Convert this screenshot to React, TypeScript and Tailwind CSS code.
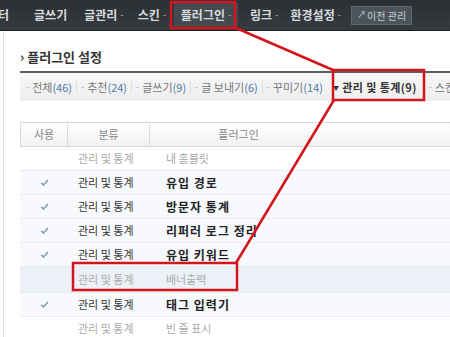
import React from "react";

const font = { fontFamily: '"Noto Sans CJK KR", "Noto Sans", sans-serif' };

function NavItem({ label, arrow, x }: { label: string; arrow?: boolean; x: string }) {
  return (
    <div className={`flex items-center text-[12px] font-bold text-[#d8dcdf] ${x}`}>
      <span>{label}</span>
      {arrow && <span className="ml-[3px] text-[9px] text-[#8a9096]">-</span>}
    </div>
  );
}

function Tab({ label, count, sep = true }: { label: string; count: string; sep?: boolean }) {
  return (
    <div className="flex items-center">
      <span className="text-[#aaa] mr-[3px] text-[9px]">-</span>
      <span className="text-[#777]">{label}</span>
      <span className="text-[#4a7aa8]">({count})</span>
      {sep && <span className="mx-[4px] h-[12px] w-px bg-[#dcdcdc]" />}
    </div>
  );
}

type Row = { on: boolean; name: string; bg: string };
const rows: Row[] = [
  { on: false, name: "내 홈블릿", bg: "bg-white" },
  { on: true, name: "유입 경로", bg: "bg-[#f7f9fc]" },
  { on: true, name: "방문자 통계", bg: "bg-[#f7f9fc]" },
  { on: true, name: "리퍼러 로그 정리", bg: "bg-[#f7f9fc]" },
  { on: true, name: "유입 키워드", bg: "bg-[#f7f9fc]" },
  { on: false, name: "배너출력", bg: "bg-[#edf1f7]" },
  { on: true, name: "태그 입력기", bg: "bg-[#f7f9fc]" },
  { on: false, name: "빈 줄 표시", bg: "bg-white" },
];

function Check() {
  return (
    <svg width="9" height="7" viewBox="0 0 10 8">
      <path d="M1 4.2 L3.8 6.8 L9 1.2" stroke="#7d94ab" strokeWidth="1.6" fill="none" />
    </svg>
  );
}

export default function App() {
  return (
    <div className="relative w-[450px] h-[337px] overflow-hidden bg-white" style={font}>
      {/* Top nav */}
      <div className="h-[31px] bg-gradient-to-b from-[#2b3034] to-[#353b40] flex items-center border-b border-[#1d2124]">
        <NavItem label="터" x="-ml-[2px]" />
        <NavItem label="글쓰기" x="ml-[25px]" />
        <NavItem label="글관리" arrow x="ml-[17px]" />
        <NavItem label="스킨" arrow x="ml-[14px]" />
        <div className="ml-[8px] h-[25px] w-[64px] bg-[#434a50] flex items-center justify-center">
          <NavItem label="플러그인" arrow x="" />
        </div>
        <NavItem label="링크" arrow x="ml-[12px]" />
        <NavItem label="환경설정" arrow x="ml-[12px]" />
        <div className="ml-[10px] h-[19px] px-[5px] flex items-center bg-[#4b545b] border border-[#5f686f] text-[10px] text-[#c9ced2]">
          <span className="text-[9px] mr-[1px]">↗</span>이전 관리
        </div>
      </div>

      {/* Body */}
      <div className="pl-[3px] flex">
        <div className="border-l border-[#dedede] pl-[16px] flex-1 h-[306px]">
          <div className="h-[40px] flex items-end pb-[5px]">
            <span className="text-[13px] font-bold text-[#333] mr-[3px]">›</span>
            <span className="text-[13px] font-bold text-[#333]">플러그인 설정</span>
          </div>
          <div className="h-[2px] bg-[#5a5f63]" />
          <div className="h-[28px] bg-gradient-to-b from-[#f7f7f7] to-[#eeeeee] flex items-center pl-[6px] text-[11px] whitespace-nowrap">
            <Tab label="전체" count="46" />
            <Tab label="추천" count="24" />
            <Tab label="글쓰기" count="9" />
            <Tab label="글 보내기" count="6" />
            <Tab label="꾸미기" count="14" sep={false} />
            <div className="ml-[10px] flex items-center font-bold text-[#333] text-[11px] tracking-[0.4px]">
              <span className="text-[6px] mr-[3px]">▼</span>관리 및 통계(9)
            </div>
            <div className="ml-[12px] flex items-center">
              <span className="text-[#aaa] mr-[3px] text-[9px]">-</span>
              <span className="text-[#777]">스킨</span>
            </div>
          </div>

          {/* Table */}
          <div className="mt-[21px] text-[11px]">
            <div className="h-[25px] flex border-t border-b border-[#d8d8d8] bg-gradient-to-b from-white to-[#f1f1f1] text-[#888]">
              <div className="w-[48px] flex items-center justify-center border-r border-l border-[#dcdcdc]">사용</div>
              <div className="w-[82px] flex items-center justify-center border-r border-[#dcdcdc]">분류</div>
              <div className="flex-1 flex items-center justify-center pr-[128px]">플러그인</div>
            </div>
            {rows.map((r, i) => (
              <div
                key={i}
                className={`${i === 5 ? "h-[26px]" : "h-[24px]"} flex items-center border-b border-[#e8ebef] ${r.bg}`}
              >
                <div className="w-[48px] flex justify-center">{r.on && <Check />}</div>
                <div className={`w-[82px] pl-[10px] ${r.on ? "text-[#333]" : "text-[#aaa]"}`}>관리 및 통계</div>
                <div className={`pl-[16px] ${r.on ? "text-[12px] font-bold text-[#222] tracking-[1px]" : "text-[#aaa]"}`}>
                  {r.name}
                </div>
              </div>
            ))}
          </div>
        </div>
      </div>

      {/* Annotation overlay */}
      <svg className="absolute left-0 top-0 pointer-events-none" width="450" height="337">
        <g stroke="#d4141c" fill="none" strokeWidth="2.5">
          <rect x="171" y="2" width="64" height="26" />
          <rect x="333" y="70" width="91" height="30" />
          <rect x="73" y="263" width="164" height="27" />
          <line x1="236" y1="28" x2="333" y2="70" />
          <line x1="334" y1="100" x2="236" y2="263" />
        </g>
      </svg>
    </div>
  );
}
